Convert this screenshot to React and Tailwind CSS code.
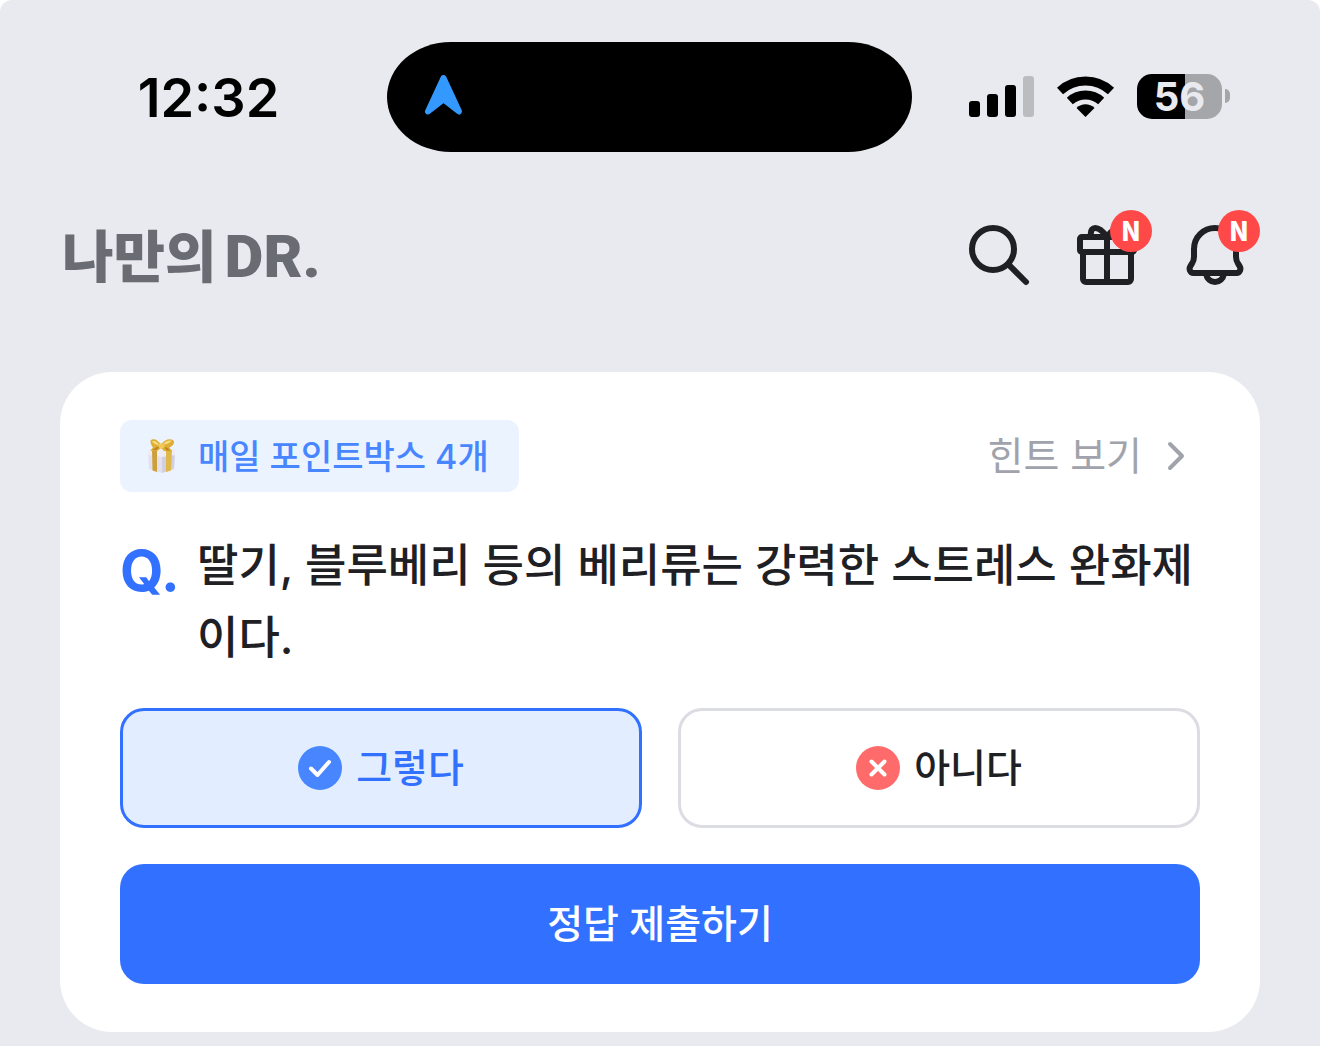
import React, { useState } from 'react';
import { clsx } from 'clsx';

const SearchIcon = () => (
  <svg viewBox="0 0 24 24" className="size-18" fill="none" stroke="currentColor" strokeWidth="2" strokeLinecap="round" aria-hidden="true">
    <circle cx="10" cy="10" r="7" />
    <path d="M15.2 15.2L21 21" />
  </svg>
);

const GiftIcon = () => (
  <svg viewBox="0 0 24 24" className="size-18" fill="none" stroke="currentColor" strokeWidth="2" strokeLinejoin="round" aria-hidden="true">
    <rect x="3" y="6" width="18" height="5" rx="0.6" />
    <path d="M4 11v9a1 1 0 0 0 1 1h14a1 1 0 0 0 1-1v-9M12 6v15" />
    <path d="M6.600 6V4.800C6.600 3.700 7.200 3 8.100 3c1.500 0 2.500 1 3.900 3 1.400-2 2.400-3 3.900-3 .9 0 1.500.7 1.500 1.800V6" />
  </svg>
);

const BellIcon = () => (
  <svg viewBox="0 0 24 24" className="size-18" fill="none" stroke="currentColor" strokeWidth="2" strokeLinejoin="round" aria-hidden="true">
    <path d="M12 3c-3.900 0-7 3.100-7 7v2.600c0 .9-.2 1.600-.7 2.300l-.5.8c-.6 1-.1 2.300 1 2.300h14.400c1.100 0 1.600-1.300 1-2.300l-.5-.8c-.5-.7-.7-1.400-.7-2.300V10c0-3.900-3.100-7-7-7z" />
    <path d="M9 18.300c.3 1.600 1.500 2.700 3 2.700s2.700-1.100 3-2.700" />
  </svg>
);

const GiftBoxEmoji = () => (
  <svg viewBox="0 0 36 36" className="size-9" aria-hidden="true">
    <path d="M4 12l13-2 14 2-1 19-13 4-12-4z" fill="#e4e1ee" />
    <path d="M18 16l13-3-1 18-12 4z" fill="#d3cfe2" />
    <path d="M4 12l13-2 14 2v5l-13 2-14-2z" fill="#eeecf5" />
    <path d="M8 12l5 1v21l-4.500-1.500z" fill="#cda13a" />
    <path d="M22 13l6-1-1 20.500-5 1.500z" fill="#dfb84c" />
    <path d="M17 7C14 1 9 0 6.500 2.500 6 5 8 8 9 9.500c-1 1-2 2.500-2.500 3.500h6.500l4-3 3 3 8 .5-2.500-4C29 8 31 5 29.500 2.500 26 0 20 1.500 17 7z" fill="#dfae35" />
    <path d="M15.500 7c-2.500-3.500-5-4.500-7.500-4C9.500 5.500 12 7 15.500 7zM19 6.500c2-3 5-4.500 8.500-4C26 5 23 6.500 19 6.500z" fill="#f7dc85" />
    <path d="M12.500 9l-4 3h4l3-3zM20 9.500l3 3h3l-3-3z" fill="#b98624" />
    <ellipse cx="17.500" cy="8" rx="2.800" ry="2.800" fill="#f0c956" />
  </svg>
);

const CheckBadge = () => (
  <svg viewBox="0 0 44 44" className="size-11" fill="none" stroke="#fff" strokeWidth="4" strokeLinecap="round" strokeLinejoin="round" aria-hidden="true">
    <circle cx="22" cy="22" r="22" fill="#4886ff" stroke="none" />
    <path d="M13 22.500l6.500 6.500L31 16" />
  </svg>
);

const CrossBadge = () => (
  <svg viewBox="0 0 44 44" className="size-11" fill="none" stroke="#fff" strokeWidth="4" strokeLinecap="round" aria-hidden="true">
    <circle cx="22" cy="22" r="22" fill="#ff6b6b" stroke="none" />
    <path d="M15.500 15.500l13 13M28.500 15.500l-13 13" />
  </svg>
);

const StatusBar = () => (
  <div className="grid grid-cols-[387fr_525fr_408fr] items-center pt-[42px] text-black">
    <div className="text-center pl-[30px] pt-[2px] text-[54px] leading-[60px] font-semibold">12:32</div>
    <div className="h-[110px] rounded-[64px/55px] bg-black flex items-center pl-9">
      <svg viewBox="0 0 42 46" className="w-[42px] h-[46px] -mt-1" aria-hidden="true">
        <path d="M20.500 6L5 39.500 20.500 27.500 36 39.500z" fill="#3399ff" stroke="#3399ff" strokeWidth="6" strokeLinejoin="round" />
      </svg>
    </div>
    <div className="flex items-center justify-end gap-[22px] pr-[90px]">
      <svg viewBox="0 0 66 42" className="w-[66px] h-[42px]" aria-hidden="true">
        <rect x="0" y="25" width="11" height="16" rx="3" />
        <rect x="18" y="18" width="11" height="23" rx="3" />
        <rect x="36" y="9" width="11" height="32" rx="3" />
        <rect x="54" y="0" width="11" height="41" rx="3" fill="#bbbcc0" />
      </svg>
      <svg viewBox="0 0 58 42" className="w-[58px] h-[42px]" fill="none" stroke="#000" strokeWidth="9" aria-hidden="true">
        <path d="M3 15a37.500 37.500 0 0 1 51 0" />
        <path d="M12.800 25a23.500 23.500 0 0 1 31.400 0" />
        <path d="M28.500 41l-9-9c5-5 13-5 18 0z" fill="#000" stroke="none" />
      </svg>
      <div className="flex items-center gap-[3px] pb-[2px]">
        <div className="w-[85px] h-[45px] rounded-[15px] bg-[linear-gradient(90deg,#000_48px,#a4a6aa_48px)] text-center text-[40px] leading-[45px] font-bold text-[#e9eaef]">
          56
        </div>
        <div className="w-[5px] h-[14px] rounded-r-full bg-[#a4a6aa]" />
      </div>
    </div>
  </div>
);

const IconButton = ({ label, isNew, children }) => (
  <button type="button" aria-label={label} className="relative size-18 text-[#1f2024]">
    {children}
    {isNew && (
      <span className="absolute -top-[9px] -right-[9px] size-[42px] rounded-full bg-[#ff4848] text-white text-[26px] leading-[40px] font-black font-['Noto_Sans_CJK_KR',sans-serif]">
        N
      </span>
    )}
  </button>
);

const AppHeader = () => (
  <header className="mt-[67px] pl-[62px] pr-[69px] flex items-center justify-between">
    <h1 className="flex items-center gap-2 text-[#6a6c73] font-black">
      <span className="text-[56px] leading-[68px] pb-1 font-['Noto_Sans_CJK_KR',sans-serif]">나만의</span>
      <span className="text-[60px] leading-[68px] pt-1 font-['Liberation_Sans_Narrow',Roboto,sans-serif]">DR.</span>
    </h1>
    <nav className="flex gap-9">
      <IconButton label="검색">
        <SearchIcon />
      </IconButton>
      <IconButton label="선물" isNew>
        <GiftIcon />
      </IconButton>
      <IconButton label="알림" isNew>
        <BellIcon />
      </IconButton>
    </nav>
  </header>
);

const choices = [
  { value: 'yes', label: '그렇다', icon: CheckBadge },
  { value: 'no', label: '아니다', icon: CrossBadge },
];

const QuizCard = () => {
  const [answer, setAnswer] = useState('yes');

  return (
    <section className="mt-[81px] mx-[60px] px-[60px] py-12 rounded-[52px] bg-white">
      <div className="flex items-center justify-between">
        <div className="h-18 pl-6 pr-[30px] flex items-center gap-[18px] rounded-xl bg-[#ebf3ff] text-[34px] font-medium text-[#4886ff]">
          <GiftBoxEmoji />
          <span>매일 포인트박스 4개</span>
        </div>
        <a href="#hint" className="flex items-center gap-[10px] text-[39px] leading-[72px] text-[#a0a3ab]">
          힌트 보기
          <svg viewBox="0 0 24 24" className="size-12" fill="none" stroke="currentColor" strokeWidth="2" strokeLinecap="round" strokeLinejoin="round" aria-hidden="true">
            <path d="M9 6l6 6-6 6" />
          </svg>
        </a>
      </div>

      <div className="mt-[38px] flex items-start">
        <span className="w-[77px] shrink-0 text-[56px] leading-[82px] font-bold text-[#3270ff]">Q.</span>
        <h2 className="flex-1 text-[45px] leading-[72px] font-medium text-[#1f2024] break-all">
          딸기, 블루베리 등의 베리류는 강력한 스트레스 완화제이다.
        </h2>
      </div>

      <div className="mt-[34px] grid grid-cols-2 gap-9">
        {choices.map((choice) => {
          const isSelected = answer === choice.value;
          return (
            <button
              key={choice.value}
              type="button"
              aria-pressed={isSelected}
              onClick={() => setAnswer(choice.value)}
              className={clsx(
                'h-[120px] flex items-center justify-center gap-[14px] rounded-3xl border-3 text-[39px] font-medium',
                isSelected
                  ? 'border-[#3270ff] bg-[#e2eeff] text-[#3270ff]'
                  : 'border-[#dcdde3] bg-white text-[#1f2024]'
              )}
            >
              <choice.icon />
              {choice.label}
            </button>
          );
        })}
      </div>

      <button type="button" className="mt-9 w-full h-[120px] rounded-3xl bg-[#3270ff] text-[39px] font-medium text-white">
        정답 제출하기
      </button>
    </section>
  );
};

const App = () => (
  <div className="bg-white">
    <main className="min-h-screen pb-[14px] rounded-t-xl bg-[#e9eaef] font-[Inter,'Noto_Sans_CJK_KR',sans-serif]">
      <StatusBar />
      <AppHeader />
      <QuizCard />
    </main>
  </div>
);

export default App;
